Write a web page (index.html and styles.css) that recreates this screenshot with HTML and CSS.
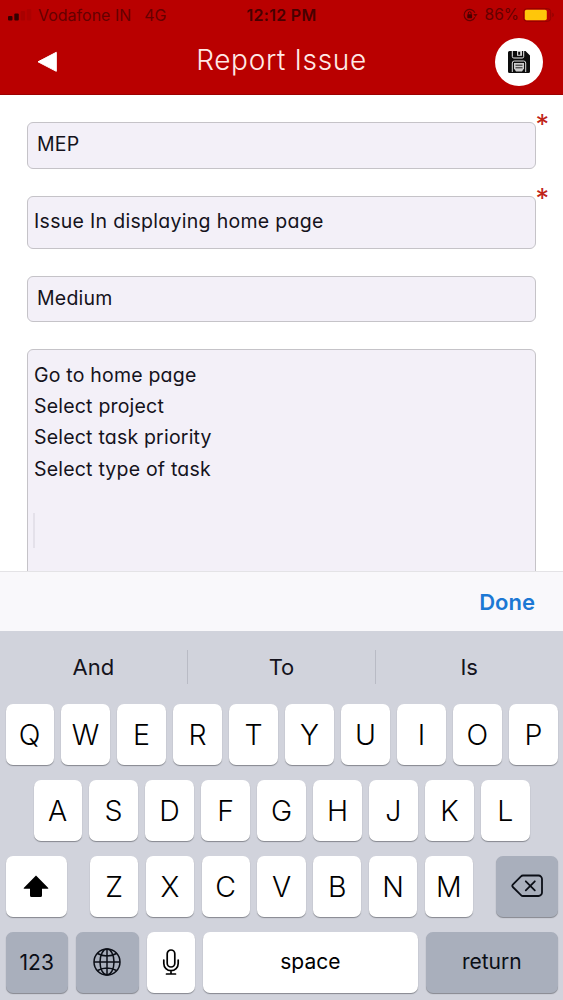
FILE: index.html
```html
<!DOCTYPE html>
<html lang="en">
<head>
    <meta charset="UTF-8">
    <meta name="viewport" content="width=device-width, initial-scale=1.0">
    <title>Report Issue</title>
    <link rel="stylesheet" href="styles.css">
</head>
<body>

    <header class="header">
        <div class="status-bar">
            <div class="status-left">
                <svg class="signal" width="24" height="12" viewBox="0 0 24 12">
                    <rect x="0" y="7" width="4.5" height="4.5" rx="1" fill="#350000"/>
                    <rect x="6.3" y="4.5" width="4.5" height="7" rx="1" fill="#350000"/>
                    <rect x="12.6" y="2" width="4.5" height="9.5" rx="1" fill="#a80000"/>
                    <rect x="18.8" y="0" width="4.5" height="11.5" rx="1" fill="#ac0000"/>
                </svg>
                <span class="carrier">Vodafone IN</span>
                <span class="network">4G</span>
            </div>
            <span class="time">12:12 PM</span>
            <div class="status-right">
                <svg class="lock" width="15" height="14" viewBox="0 0 15 14">
                    <path d="M11.9 9.2a5.6 5.6 0 1 1 0-4.4" fill="none" stroke="#650000" stroke-width="1.2"/>
                    <path d="M10.2 6h4.4l-2.2 3z" fill="#650000"/>
                    <rect x="4.3" y="6.2" width="4.8" height="4" rx=".6" fill="#450000"/>
                    <path d="M5.3 6.5V5.2a1.4 1.4 0 0 1 2.8 0v1.3" fill="none" stroke="#450000"/>
                </svg>
                <span class="percent">86%</span>
                <svg class="battery" width="32" height="14" viewBox="0 0 32 14">
                    <rect x=".7" y=".7" width="27" height="12.6" rx="3" fill="none" stroke="#920000"/>
                    <rect x="1.8" y="1.8" width="22" height="10.4" rx="1.8" fill="#ffc60a"/>
                    <path d="M29.3 4.8c2 .6 2 3.8 0 4.4z" fill="#920000"/>
                </svg>
            </div>
        </div>
        <div class="nav">
            <button class="back" type="button" aria-label="Back">
                <svg width="22" height="22" viewBox="0 0 22 22">
                    <path d="M2 10.8 20.3 1.3v19z" fill="#fff" stroke="#fff" stroke-linejoin="round"/>
                </svg>
            </button>
            <h1>Report Issue</h1>
            <button class="save" type="button" aria-label="Save">
                <svg width="22" height="22" viewBox="0 0 22 22">
                    <path d="M1.5 0h16L22 4.5v16a1.5 1.5 0 0 1-1.5 1.5h-19A1.5 1.5 0 0 1 0 20.5v-19A1.5 1.5 0 0 1 1.5 0z" fill="#0c0c0c"/>
                    <path d="M4.3 0v5.5q0 1.500 1.500 1.500h8.400q1.500 0 1.500-1.500V0" fill="none" stroke="#eee"/>
                    <path d="M9 0h5v4.8H9z" fill="#d5d5d5"/>
                    <path d="M10.2.8h2v3h-2z" fill="#0c0c0c"/>
                    <path d="M4.3 21v-9q0-2 2-2h9.400q2 0 2 2v9" fill="none" stroke="#ddd"/>
                    <path d="M6 12h10v5.500l-2 3H8l-2-3z" fill="#ccc"/>
                    <path d="M7.500 14.200h7M7.500 16.800h7" stroke="#222"/>
                </svg>
            </button>
        </div>
    </header>

    <form class="issue-form">
        <div class="field required">MEP</div>
        <div class="field field-title required">Issue In displaying home page</div>
        <div class="field">Medium</div>
        <div class="field field-steps">
            <p>Go to home page</p>
            <p>Select project</p>
            <p>Select task priority</p>
            <p>Select type of task</p>
            <span class="caret"></span>
        </div>
    </form>

    <div class="toolbar">
        <button class="done" type="button">Done</button>
    </div>

    <section class="keyboard">
        <div class="suggestions">
            <span>And</span>
            <span>To</span>
            <span>Is</span>
        </div>
        <div class="row">
            <div class="key">Q</div>
            <div class="key">W</div>
            <div class="key">E</div>
            <div class="key">R</div>
            <div class="key">T</div>
            <div class="key">Y</div>
            <div class="key">U</div>
            <div class="key">I</div>
            <div class="key">O</div>
            <div class="key">P</div>
        </div>
        <div class="row row-middle">
            <div class="key">A</div>
            <div class="key">S</div>
            <div class="key">D</div>
            <div class="key">F</div>
            <div class="key">G</div>
            <div class="key">H</div>
            <div class="key">J</div>
            <div class="key">K</div>
            <div class="key">L</div>
        </div>
        <div class="row row-shift">
            <div class="key key-wide">
                <svg width="26" height="24" viewBox="0 0 26 24">
                    <path d="M13 1.500 25.300 14q.4.800-.6.800H19v6.700q0 1.500-1.500 1.500h-9Q7 23 7 21.500v-6.700H1.300q-1 0-.6-.8z" fill="#000"/>
                </svg>
            </div>
            <div class="letters">
                <div class="key">Z</div>
                <div class="key">X</div>
                <div class="key">C</div>
                <div class="key">V</div>
                <div class="key">B</div>
                <div class="key">N</div>
                <div class="key">M</div>
            </div>
            <div class="key key-wide key-dark">
                <svg width="32" height="24" viewBox="0 0 32 24" fill="none" stroke="#0b0e16" stroke-width="1.8" stroke-linecap="round" stroke-linejoin="round">
                    <path d="M12 1.500h15.500a3.500 3.500 0 0 1 3.500 3.500v13.500a3.500 3.500 0 0 1-3.500 3.500H12q-1.200 0-2-.9L1.800 13q-1-1.200 0-2.400L10 2.400q.8-.9 2-.9z"/>
                    <path d="m14.800 7.300 9 9M23.800 7.300l-9 9"/>
                </svg>
            </div>
        </div>
        <div class="row row-bottom">
            <div class="key key-dark key-num">123</div>
            <div class="key key-dark key-globe">
                <svg width="28" height="28" viewBox="0 0 28 28" fill="none" stroke="#0b0e16" stroke-width="1.5">
                    <circle cx="14" cy="14" r="13"/>
                    <ellipse cx="14" cy="14" rx="7" ry="13"/>
                    <path d="M14 1v26M1 14h26M4.500 5.500q9.500 5 19 0M4.500 22.500q9.500-5 19 0"/>
                </svg>
            </div>
            <div class="key key-mic">
                <svg width="18" height="26" viewBox="0 0 18 26" fill="none" stroke="#000" stroke-width="1.7" stroke-linecap="round">
                    <rect x="5.2" y="1" width="7.6" height="17" rx="3.8"/>
                    <path d="M1.800 11v3.500a7.200 7.200 0 0 0 14.400 0V11M9 21.800V25M4.500 25h9"/>
                </svg>
            </div>
            <div class="key key-space">space</div>
            <div class="key key-dark key-return">return</div>
        </div>
    </section>

</body>
</html>
```
FILE: styles.css
```css
* {
    box-sizing: border-box;
}

body {
    margin: 0;
    height: 1000px;
    display: flex;
    flex-direction: column;
    overflow: hidden;
    background-color: #fff;
    font-family: Inter, "Liberation Sans", sans-serif;
    color: #15131c;
}

button {
    padding: 0;
    border: none;
    background: none;
    font-family: inherit;
}

.header {
    height: 95px;
    flex-shrink: 0;
    background-color: #b90000;
    border-bottom: 1px solid #9c0000;
}

.status-bar {
    display: grid;
    grid-template-columns: 1fr auto 1fr;
    align-items: center;
    height: 29px;
    padding: 0 8px;
    font-size: 16px;
    color: #650000;
}

.status-left,
.status-right {
    display: flex;
    align-items: center;
}

.status-right {
    justify-content: flex-end;
}

.carrier {
    margin-left: 6px;
}

.network {
    margin-left: 13px;
}

.time {
    font-weight: 600;
    letter-spacing: 0.3px;
    color: #480000;
}

.percent {
    margin: 0 4px 0 7px;
    font-size: 15.5px;
}

.nav {
    display: grid;
    grid-template-columns: 48px 1fr 48px;
    align-items: center;
    height: 65px;
    padding: 0 20px 0 23px;
}

.back,
.save {
    display: flex;
    align-items: center;
    justify-content: center;
    width: 48px;
    height: 48px;
}

.save {
    background-color: #fff;
    border-radius: 50%;
}

h1 {
    margin: -3px 0 0 -3px;
    text-align: center;
    font-size: 28px;
    font-weight: 350;
    letter-spacing: 0.65px;
    color: #ffe9e6;
}

.issue-form {
    display: flex;
    flex-direction: column;
    gap: 27px;
    height: 476px;
    flex-shrink: 0;
    padding: 27px 27px 0;
    overflow: hidden;
    font-size: 19.5px;
    letter-spacing: 0.2px;
    font-feature-settings: "cv11";
}

.field {
    position: relative;
    display: flex;
    align-items: center;
    flex-shrink: 0;
    height: 46.5px;
    padding: 0 9px 2px;
    border: 1px solid #c5c3c8;
    border-radius: 6px;
    background-color: #f3f0f8;
}

.field-title {
    height: 53px;
    padding: 0 6px 2px;
    letter-spacing: 0.3px;
}

.required::after {
    content: "*";
    position: absolute;
    top: -12px;
    right: -14px;
    font-size: 27px;
    line-height: 1;
    letter-spacing: 0;
    color: #c02418;
}

.field-steps {
    display: block;
    height: 240px;
    padding: 10px 6px;
}

.field-steps p {
    margin: 0;
    line-height: 31.2px;
}

.caret {
    display: block;
    width: 2px;
    height: 35px;
    margin: 28px 0 0 -1px;
    background-color: #e4e1ea;
}

.toolbar {
    display: flex;
    align-items: center;
    justify-content: flex-end;
    flex-shrink: 0;
    height: 60px;
    padding-right: 28px;
    border-top: 1px solid #e4e3e6;
    background-color: #f9f8fb;
}

.done {
    font-size: 22px;
    font-weight: 600;
    color: #1c78d4;
}

.keyboard {
    flex: 1;
    display: flex;
    flex-direction: column;
    gap: 14.5px;
    padding: 0 5.5px;
    background-color: #d1d3dc;
}

.suggestions {
    display: grid;
    grid-template-columns: repeat(3, 1fr);
    align-items: center;
    height: 58px;
    margin: 0 -5px 0 -6px;
    padding-top: 14px;
    font-size: 22px;
    text-align: center;
}

.suggestions span {
    line-height: 34px;
}

.suggestions span + span {
    border-left: 1px solid #b9bbc5;
}

.row,
.letters {
    display: flex;
    gap: 7.7px;
}

.row-middle {
    padding: 0 28px;
}

.row-shift,
.row-bottom {
    justify-content: space-between;
}

.row-bottom {
    gap: 0;
}

.key {
    flex: 1;
    display: flex;
    align-items: center;
    justify-content: center;
    height: 61.5px;
    border-radius: 7px;
    background-color: #fff;
    box-shadow: 0 1px 1px #85878e;
    font-size: 28.5px;
    font-weight: 350;
    color: #000;
}

.letters .key {
    flex: none;
    width: 48.1px;
}

.key-wide {
    flex: none;
    width: 61.5px;
}

.key-dark {
    background-color: #a9afbc;
    color: #0b0e16;
}

.key-num,
.key-space,
.key-return {
    padding-bottom: 2px;
    font-size: 21px;
    font-weight: 400;
}

.key-num {
    padding-bottom: 0;
}

.key-num,
.key-globe {
    flex: none;
    width: 62.5px;
}

.key-mic {
    flex: none;
    width: 48px;
}

.key-space {
    flex: none;
    width: 215px;
}

.key-return {
    flex: none;
    width: 131.5px;
}
```
